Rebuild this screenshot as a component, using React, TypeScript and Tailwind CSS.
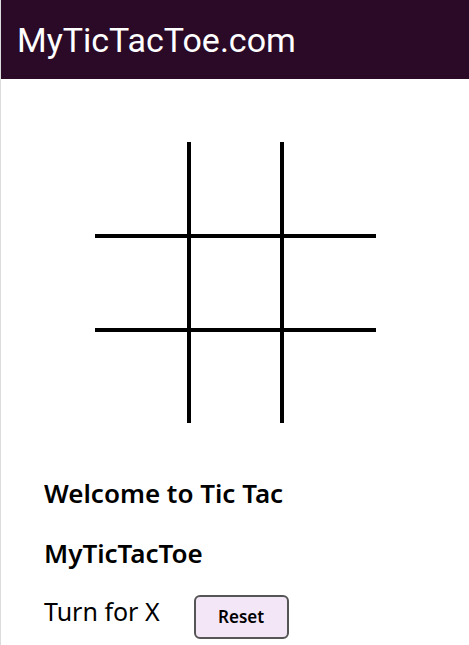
import React from "react";

const cellBorders = [
  "border-r-2 border-b-2",
  "border-x-2 border-b-2",
  "border-l-2 border-b-2",
  "border-r-2 border-y-2",
  "border-x-2 border-y-2",
  "border-l-2 border-y-2",
  "border-r-2 border-t-2",
  "border-x-2 border-t-2",
  "border-l-2 border-t-2",
];

const cellSizes = [
  "w-[94px] h-[94px]",
  "w-[93px] h-[94px]",
  "w-[94px] h-[94px]",
  "w-[94px] h-[94px]",
  "w-[93px] h-[94px]",
  "w-[94px] h-[94px]",
  "w-[94px] h-[93px]",
  "w-[93px] h-[93px]",
  "w-[94px] h-[93px]",
];

export default function App() {
  return (
    <div className="min-h-[645px] border-l border-[#dcdcdc] bg-white">
      <header className="h-[79px] bg-[#2a0a27] flex items-center pl-4">
        <h1
          className="text-[34px] text-white leading-none"
          style={{ fontFamily: "Roboto, sans-serif" }}
        >
          MyTicTacToe.com
        </h1>
      </header>
      <div className="flex justify-center pt-[63px]">
        <div className="grid grid-cols-[94px_93px_94px]">
          {cellBorders.map((b, i) => (
            <div
              key={i}
              className={`${b} ${cellSizes[i]} border-black bg-white`}
            />
          ))}
        </div>
      </div>
      <div
        className="pl-[43px] pt-[54px] text-black"
        style={{ fontFamily: "'Noto Sans', sans-serif" }}
      >
        <h2 className="text-[26px] font-semibold leading-[32px]">Welcome to Tic Tac</h2>
        <h2 className="text-[26px] font-semibold leading-[32px] mt-[28px]">MyTicTacToe</h2>
        <div className="flex items-start mt-[26px] gap-[34px]">
          <span className="text-[25px] leading-[32px]">Turn for X</span>
          <button className="w-[95px] h-[44px] rounded-[6px] border-2 border-[#555] bg-[#f3e6f7] text-[17px] font-semibold">
            Reset
          </button>
        </div>
      </div>
    </div>
  );
}
